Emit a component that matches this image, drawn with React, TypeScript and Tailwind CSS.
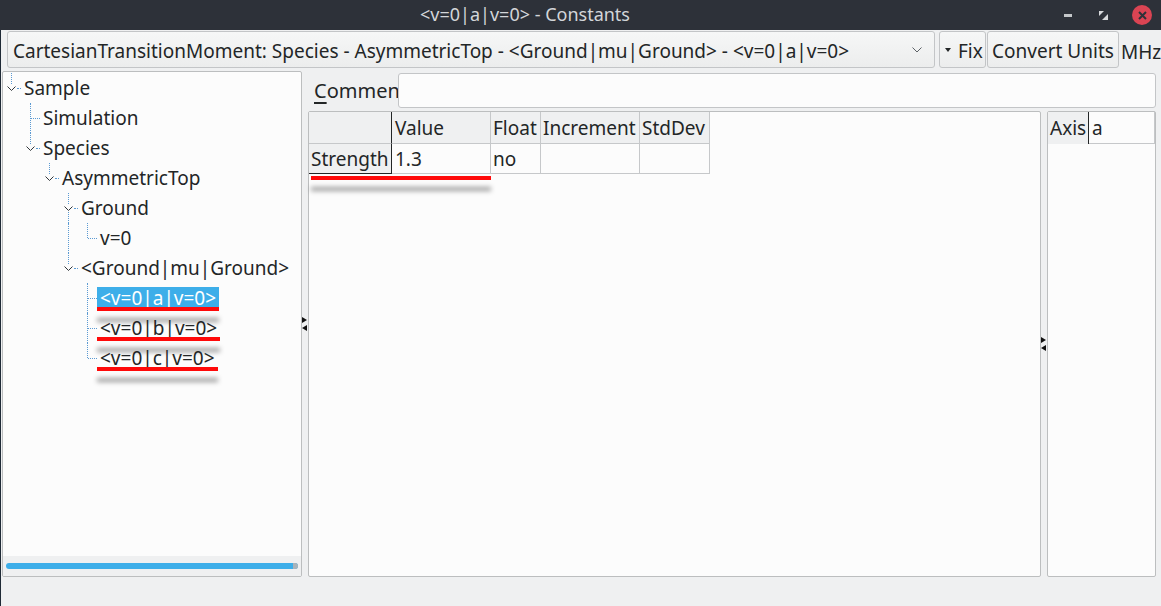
import React from "react";

type Kind = "none" | "full" | "half";

interface TreeRow {
  label: string;
  guides: Kind[]; // ancestor columns
  own: Kind;
  branch: boolean;
  selected?: boolean;
  marked?: boolean;
}

const rows: TreeRow[] = [
  { label: "Sample", guides: [], own: "half", branch: true },
  { label: "Simulation", guides: ["none"], own: "full", branch: false },
  { label: "Species", guides: ["none"], own: "half", branch: true },
  { label: "AsymmetricTop", guides: ["none", "none"], own: "half", branch: true },
  { label: "Ground", guides: ["none", "none", "none"], own: "full", branch: true },
  { label: "v=0", guides: ["none", "none", "none", "full"], own: "half", branch: false },
  { label: "<Ground|mu|Ground>", guides: ["none", "none", "none"], own: "half", branch: true },
  { label: "<v=0|a|v=0>", guides: ["none", "none", "none", "none"], own: "full", branch: false, selected: true, marked: true },
  { label: "<v=0|b|v=0>", guides: ["none", "none", "none", "none"], own: "full", branch: false, marked: true },
  { label: "<v=0|c|v=0>", guides: ["none", "none", "none", "none"], own: "half", branch: false, marked: true },
];

function Guide({ kind, own, branch }: { kind: Kind; own?: boolean; branch?: boolean }) {
  return (
    <div className="relative w-[19px] h-[30px] shrink-0">
      {kind === "full" && !branch && (
        <div className="absolute left-[9px] top-0 h-[30px] border-l border-dotted border-[#5b9ad2]" />
      )}
      {kind === "full" && branch && (
        <>
          <div className="absolute left-[9px] top-0 h-[11px] border-l border-dotted border-[#5b9ad2]" />
          <div className="absolute left-[9px] top-[19px] h-[11px] border-l border-dotted border-[#5b9ad2]" />
        </>
      )}
      {kind === "half" && (
        <div
          className={
            branch
              ? "absolute left-[9px] top-0 h-[11px] border-l border-dotted border-[#5b9ad2]"
              : "absolute left-[9px] top-0 h-[15px] border-l border-dotted border-[#5b9ad2]"
          }
        />
      )}
      {own && (
        <div
          className={
            branch
              ? "absolute left-[15px] right-0 top-[15px] border-t border-dotted border-[#5b9ad2]"
              : "absolute left-[10px] right-0 top-[15px] border-t border-dotted border-[#5b9ad2]"
          }
        />
      )}
      {own && branch && (
        <svg className="absolute left-[5px] top-[13px]" width="10" height="6" viewBox="0 0 10 6">
          <polyline points="0.5,0.5 4.5,4.5 8.5,0.5" fill="none" stroke="#31363b" strokeWidth="1" />
        </svg>
      )}
    </div>
  );
}

function RedMark() {
  return (
    <div className="absolute left-0 right-0 bottom-[-2px] h-[4px] bg-[#ff0a0a] shadow-[0_11px_5px_rgba(0,0,0,0.38)]" />
  );
}

function SplitHandle() {
  return (
    <div className="w-[6px] shrink-0 flex items-center justify-center">
      <svg width="6" height="14" viewBox="0 0 6 14">
        <polygon points="0,0 5,3 0,6" fill="#111" />
        <polygon points="5,8 0,11 5,14" fill="#111" />
      </svg>
    </div>
  );
}

function TitleBar() {
  return (
    <div className="h-[30px] shrink-0 bg-[#2d3139] flex items-center">
      <div className="w-[1050px] text-center text-[18px] text-[#d3d6d9] leading-[28px] pb-[2px]">
        {"<v=0|a|v=0> - Constants"}
      </div>
      <div className="flex-1 flex items-center">
        <div className="ml-[14px] w-[8px] h-[3px] bg-[#c4c7ca]" />
        <svg className="ml-[27px]" width="9" height="9" viewBox="0 0 9 9">
          <path d="M0 0 H5 L0 5 Z" fill="#d7d9dc" />
          <path d="M9 3 V9 H3 Z" fill="#d7d9dc" />
        </svg>
        <div className="ml-[24px] w-[20px] h-[20px] rounded-full bg-[#da4453] flex items-center justify-center">
          <svg width="9" height="9" viewBox="0 0 9 9">
            <path d="M1 1 L8 8 M8 1 L1 8" stroke="#2d3139" strokeWidth="2" />
          </svg>
        </div>
      </div>
    </div>
  );
}

function Tree() {
  return (
    <div className="ml-[1px] w-[300px] shrink-0 flex flex-col border border-[#bcbebf] rounded-[2px] bg-[#fcfcfc] overflow-hidden">
      <div className="flex-1 -ml-px pt-[1px]">
        {rows.map((r) => (
          <div key={r.label} className="flex items-center h-[30px]">
            {r.guides.map((g, i) => (
              <Guide key={i} kind={g} />
            ))}
            <Guide kind={r.own} own branch={r.branch} />
            <div
              className={
                r.selected
                  ? "relative px-[3px] leading-[22px] text-[19px] whitespace-nowrap bg-[#3daee9] text-white"
                  : "relative px-[3px] leading-[22px] text-[19px] whitespace-nowrap"
              }
            >
              {r.label}
              {r.marked && <RedMark />}
            </div>
          </div>
        ))}
      </div>
      <div className="h-[20px] bg-[#eff0f1] flex items-center px-[3px]">
        <div className="flex-1 h-[6px] rounded-full bg-[#3daee9] flex justify-end">
          <div className="w-[5px] h-[6px] rounded-r-full bg-[#a9b3ba]" />
        </div>
      </div>
    </div>
  );
}

function ValueTable() {
  return (
    <div className="w-[733px] shrink-0 border border-[#bcbebf] rounded-[2px] bg-[#fcfcfc] text-[19px]">
      <div className="flex h-[32px] leading-[32px]">
        <div className="w-[83px] bg-[#eff0f1] border-r border-[#232627] border-b border-b-[#c6c8ca]" />
        <div className="w-[99px] bg-[#eff0f1] border-r border-b border-[#c6c8ca] px-[3px]">Value</div>
        <div className="w-[50px] bg-[#eff0f1] border-r border-b border-[#c6c8ca] px-[2px]">Float</div>
        <div className="w-[99px] bg-[#eff0f1] border-r border-b border-[#c6c8ca] px-[2px] whitespace-nowrap">Increment</div>
        <div className="w-[70px] bg-[#eff0f1] border-r border-b border-[#c6c8ca] px-[2px]">StdDev</div>
      </div>
      <div className="flex h-[30px] leading-[30px]">
        <div className="relative w-[83px] bg-[#eff0f1] border-r border-b border-[#232627] px-[2px]">
          Strength
          <div className="absolute left-[2px] w-[180px] top-[32px] h-[4px] bg-[#ff0a0a] shadow-[0_11px_5px_rgba(0,0,0,0.38)]" />
        </div>
        <div className="w-[99px] border-r border-b border-[#c6c8ca] px-[3px]">1.3</div>
        <div className="w-[50px] border-r border-b border-[#c6c8ca] px-[2px]">no</div>
        <div className="w-[99px] border-r border-b border-[#c6c8ca]" />
        <div className="w-[70px] border-r border-b border-[#c6c8ca]" />
      </div>
    </div>
  );
}

function AxisTable() {
  return (
    <div className="flex-1 border border-[#bcbebf] rounded-[2px] bg-[#fcfcfc] text-[19px]">
      <div className="flex h-[32px] leading-[32px]">
        <div className="w-[41px] bg-[#eff0f1] border-r border-[#232627] px-[2px] overflow-hidden">Axis</div>
        <div className="w-[66px] border-r border-b border-[#c6c8ca] px-[3px]">a</div>
      </div>
    </div>
  );
}

export default function App() {
  return (
    <div className="w-[1161px] h-[606px] flex flex-col bg-[#eff0f1] text-[#232627] font-['Noto_Sans',sans-serif] overflow-hidden">
      <TitleBar />
      <div className="flex-1 flex flex-col border-l border-[#1f2a36] min-h-0">
        <div className="h-[37px] mt-[1px] flex items-stretch pl-[6px] text-[19px]">
          <div className="w-[928px] shrink-0 flex items-center justify-between pl-[5px] pr-[12px] pt-[3px] rounded-[3px] border border-[#c3c5c7] bg-[linear-gradient(#f6f7f7,#eceded)] whitespace-nowrap">
            <span>{"CartesianTransitionMoment: Species - AsymmetricTop - <Ground|mu|Ground> - <v=0|a|v=0>"}</span>
            <svg className="-mt-[3px]" width="10" height="6" viewBox="0 0 10 6">
              <polyline points="0.5,0.5 5,5 9.5,0.5" fill="none" stroke="#5c6166" strokeWidth="1" />
            </svg>
          </div>
          <div className="ml-[4px] w-[47px] shrink-0 flex items-center pl-[5px] pt-[4px] rounded-[3px] border border-[#c3c5c7] bg-[linear-gradient(#f6f7f7,#eceded)] overflow-hidden whitespace-nowrap">
            <svg className="-mt-[3px]" width="6" height="4" viewBox="0 0 6 4">
              <polygon points="0,0 6,0 3,4" fill="#232627" />
            </svg>
            <span className="ml-[7px]">Fix</span>
          </div>
          <div className="ml-[1px] w-[132px] shrink-0 flex items-center justify-center pt-[4px] rounded-[3px] border border-[#c3c5c7] bg-[linear-gradient(#f6f7f7,#eceded)] whitespace-nowrap">
            Convert Units
          </div>
          <span className="ml-[2px] leading-[37px] pt-[3px] whitespace-nowrap">MHz</span>
        </div>
        <div className="mt-[3px] h-[506px] flex pr-[5px]">
          <Tree />
          <SplitHandle />
          <div className="flex-1 flex flex-col">
            <div className="mt-[2px] h-[35px] flex items-stretch">
              <div className="w-[90px] shrink-0 pl-[6px] text-[20px] leading-[35px] overflow-hidden whitespace-nowrap">
                <span className="underline underline-offset-[4px]">C</span>omment
              </div>
              <div className="flex-1 rounded-[3px] border border-[#c3c5c7] bg-[#fcfcfc]" />
            </div>
            <div className="mt-[3px] flex-1 flex">
              <ValueTable />
              <SplitHandle />
              <AxisTable />
            </div>
          </div>
        </div>
      </div>
    </div>
  );
}
